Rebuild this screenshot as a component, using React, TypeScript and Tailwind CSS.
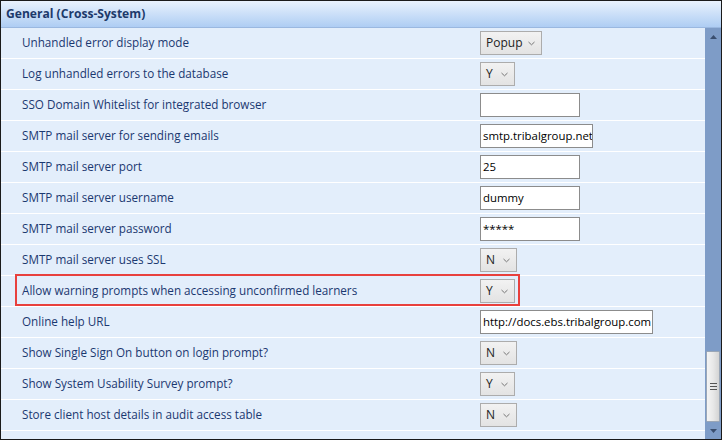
import React from 'react';

type Row = {
  label: string;
  kind: 'select' | 'input';
  value: string;
  width: number;
  highlight?: boolean;
};

const rows: Row[] = [
  { label: 'Unhandled error display mode', kind: 'select', value: 'Popup', width: 62 },
  { label: 'Log unhandled errors to the database', kind: 'select', value: 'Y', width: 35 },
  { label: 'SSO Domain Whitelist for integrated browser', kind: 'input', value: '', width: 100 },
  { label: 'SMTP mail server for sending emails', kind: 'input', value: 'smtp.tribalgroup.net', width: 113 },
  { label: 'SMTP mail server port', kind: 'input', value: '25', width: 100 },
  { label: 'SMTP mail server username', kind: 'input', value: 'dummy', width: 100 },
  { label: 'SMTP mail server password', kind: 'input', value: '*****', width: 100 },
  { label: 'SMTP mail server uses SSL', kind: 'select', value: 'N', width: 37 },
  { label: 'Allow warning prompts when accessing unconfirmed learners', kind: 'select', value: 'Y', width: 35, highlight: true },
  { label: 'Online help URL', kind: 'input', value: 'http://docs.ebs.tribalgroup.com', width: 173 },
  { label: 'Show Single Sign On button on login prompt?', kind: 'select', value: 'N', width: 37 },
  { label: 'Show System Usability Survey prompt?', kind: 'select', value: 'Y', width: 35 },
  { label: 'Store client host details in audit access table', kind: 'select', value: 'N', width: 37 },
];

function Control({ row }: { row: Row }) {
  if (row.kind === 'select') {
    return (
      <div
        className="h-[24px] flex items-center justify-between pl-[5px] pr-[6px] border border-[#acacac] bg-gradient-to-b from-[#f2f2f2] to-[#e3e3e3] text-[12px] text-[#222]"
        style={{ width: row.width }}
      >
        <span>{row.value}</span>
        <svg width="7" height="5" viewBox="0 0 7 5" className="mt-[1px]">
          <path d="M0.5 1 L3.5 3.8 L6.5 1" fill="none" stroke="#777" strokeWidth="1" />
        </svg>
      </div>
    );
  }
  return (
    <div
      className="h-[24px] flex items-center px-[2px] border border-[#8c8c8c] bg-white text-[11.4px] text-black whitespace-nowrap overflow-hidden"
      style={{ width: row.width }}
    >
      {row.value}
    </div>
  );
}

export default function App() {
  return (
    <div
      className="w-[722px] h-[440px] border border-[#1a1a1a] flex flex-col bg-[#e3eefb] overflow-hidden"
      style={{ fontFamily: '"Open Sans", "Noto Sans", sans-serif' }}
    >
      {/* Header */}
      <div className="h-[27px] shrink-0 flex items-center pl-[5px] bg-gradient-to-b from-[#e9f2fd] to-[#aecdf3] border-b border-[#9ab8e0]">
        <span className="text-[12.1px] font-bold text-[#1d3a6b]">General (Cross-System)</span>
      </div>

      <div className="flex flex-1 min-h-0">
        {/* Rows */}
        <div className="flex-1 flex flex-col">
          {rows.map((row) => (
            <div key={row.label} className="relative h-[31px] shrink-0 flex items-center border-b border-white">
              <div className="w-[479px] pl-[21px] text-[11.7px] font-medium text-[#1b3870] whitespace-nowrap">{row.label}</div>
              <Control row={row} />
              {row.highlight && (
                <span className="absolute left-[14px] top-[-2px] w-[505px] h-[32px] border-2 border-[#e8403d]" />
              )}
            </div>
          ))}
        </div>

        {/* Scrollbar */}
        <div className="w-[16px] shrink-0 flex flex-col bg-[#7e9cc7]">
          <div className="h-[17px] flex items-center justify-center">
            <svg width="7" height="4" viewBox="0 0 7 4">
              <path d="M0 4 L3.5 0 L7 4 Z" fill="#3a4e6e" />
            </svg>
          </div>
          <div className="flex-1" />
          <div className="h-[71px] mx-[1px] flex items-center justify-center border border-[#9aa6b6] bg-gradient-to-r from-[#f4f4f4] via-[#e8e8e8] to-[#d4d4d4] rounded-[1px]">
            <div className="flex flex-col gap-[2px]">
              <div className="w-[7px] h-[1px] bg-[#555]" />
              <div className="w-[7px] h-[1px] bg-[#555]" />
              <div className="w-[7px] h-[1px] bg-[#555]" />
            </div>
          </div>
          <div className="h-[17px] flex items-center justify-center">
            <svg width="7" height="4" viewBox="0 0 7 4">
              <path d="M0 0 L3.5 4 L7 0 Z" fill="#3a4e6e" />
            </svg>
          </div>
        </div>
      </div>
    </div>
  );
}
